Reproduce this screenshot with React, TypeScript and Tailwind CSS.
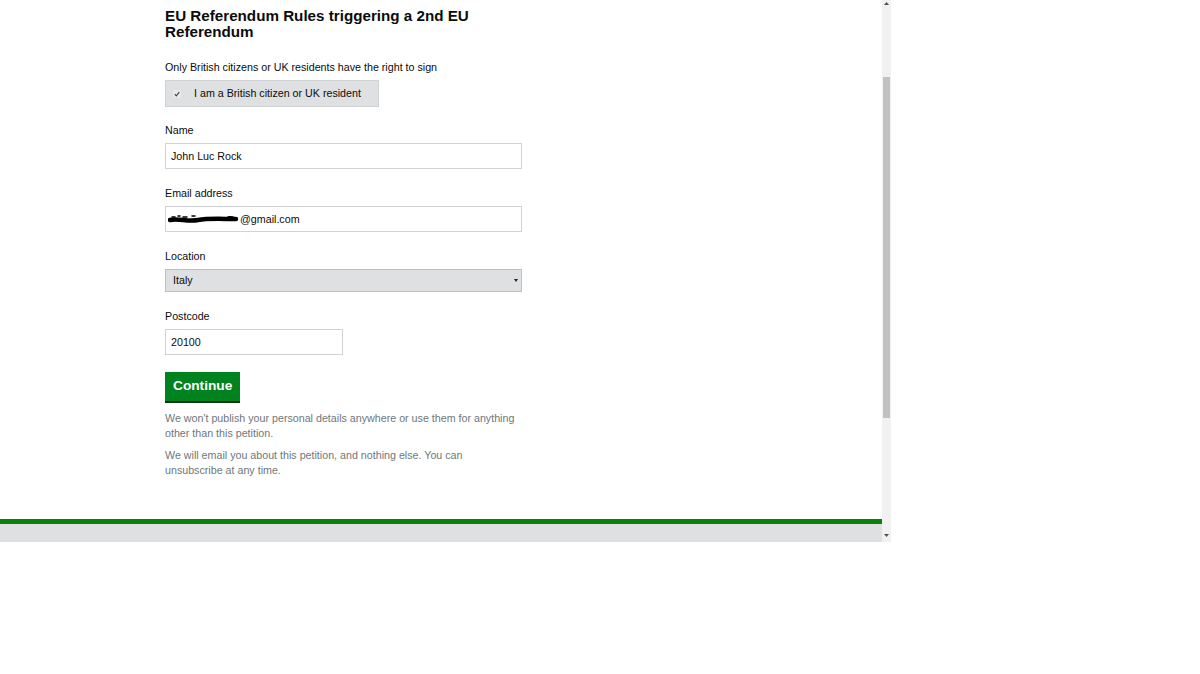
import React from "react";

const font = { fontFamily: '"Liberation Sans", Arial, sans-serif' };

function Label({ children, className = "" }: { children: React.ReactNode; className?: string }) {
  return <div className={`text-[10.7px] leading-[14px] text-[#0b0c0c] ${className}`}>{children}</div>;
}

function TextBox({ value, width = "w-[357px]", prefix }: { value: string; width?: string; prefix?: React.ReactNode }) {
  return (
    <div
      className={`mt-[6px] flex h-[26px] ${width} items-center border border-[#d0d2d3] bg-white pl-[5px] text-[10.7px] text-[#0b0c0c]`}
    >
      {prefix}
      <span>{value}</span>
    </div>
  );
}

// scribbled-out part of the email address
function Redaction() {
  return (
    <svg width="72" height="12" viewBox="0 0 72 12" className="-ml-[3px]">
      <path d="M2 7 C10 5 20 9 30 7 S55 6 68 6" stroke="#000" strokeWidth="4.5" strokeLinecap="round" fill="none" />
      <path d="M4 4 h3 M10 3 h2 M15 4 h4 M24 3 h3 M60 4 c3 -1 5 0 7 1" stroke="#000" strokeWidth="1.5" strokeLinecap="round" fill="none" />
    </svg>
  );
}

function Scrollbar() {
  return (
    <div className="flex w-[9px] flex-col items-center bg-[#f1f1f1]">
      <svg width="5" height="4" viewBox="0 0 5 4" className="mt-[2px]">
        <path d="M2.5 0 L5 3 L0 3 Z" fill="#505050" />
      </svg>
      <div className="mt-[71px] h-[341px] w-[7px] bg-[#c1c1c1]" />
      <div className="flex-1" />
      <svg width="5" height="4" viewBox="0 0 5 4" className="mb-[4px]">
        <path d="M0 0 L5 0 L2.5 3 Z" fill="#505050" />
      </svg>
    </div>
  );
}

export default function App() {
  return (
    <div className="h-[674px] w-[1200px] bg-white" style={font}>
      <div className="flex h-[542px] w-[891px]">
        <div className="flex w-[882px] flex-col">
          <div className="flex-1 pl-[165px] pt-[8px]">
            <div className="w-[357px]">
              <h1 className="text-[15.2px] font-bold leading-[16px] text-[#0b0c0c]">
                EU Referendum Rules triggering a 2nd EU Referendum
              </h1>

              <Label className="mt-[20px]">Only British citizens or UK residents have the right to sign</Label>
              <div className="mt-[6px] flex h-[27px] w-[214px] items-center border border-[#cfd1d3] bg-[#dee0e2] text-[10.7px] text-[#0b0c0c]">
                <svg width="8" height="8" viewBox="0 0 8 8" className="ml-[7px] mr-[13px]">
                  <rect x="0" y="0" width="8" height="8" rx="1" fill="#e9eaeb" />
                  <path d="M1.8 4.2 L3.3 5.8 L6.3 2.2" stroke="#444" strokeWidth="1.2" fill="none" />
                </svg>
                <span>I am a British citizen or UK resident</span>
              </div>

              <Label className="mt-[16px]">Name</Label>
              <TextBox value="John Luc Rock" />

              <Label className="mt-[17px]">Email address</Label>
              <TextBox value="@gmail.com" prefix={<Redaction />} />

              <Label className="mt-[17px]">Location</Label>
              <div className="mt-[6px] flex h-[23px] w-[357px] items-center justify-between border border-[#bfc1c3] bg-[#dee0e2] pl-[7px] pr-[3px] text-[10.7px] text-[#0b0c0c]">
                <span>Italy</span>
                <svg width="4" height="3" viewBox="0 0 4 3">
                  <path d="M0 0 L4 0 L2 3 Z" fill="#222" />
                </svg>
              </div>

              <Label className="mt-[17px]">Postcode</Label>
              <TextBox value="20100" width="w-[178px]" />

              <button
                type="button"
                className="mt-[17px] h-[29px] bg-[#00821e] px-[8px] text-[13.7px] font-bold text-white shadow-[0_2px_0_#003618]"
              >
                Continue
              </button>

              <p className="mt-[10px] text-[10.7px] leading-[15px] text-[#6f777b]">
                We won't publish your personal details anywhere or use them for anything other than this petition.
              </p>
              <p className="mt-[7px] w-[310px] text-[10.7px] leading-[15px] text-[#6f777b]">
                We will email you about this petition, and nothing else. You can unsubscribe at any time.
              </p>
            </div>
          </div>
          <div className="h-[5px] bg-[#06820b]" />
          <div className="h-[18px] bg-[#dee0e2]" />
        </div>
        <Scrollbar />
      </div>
    </div>
  );
}
